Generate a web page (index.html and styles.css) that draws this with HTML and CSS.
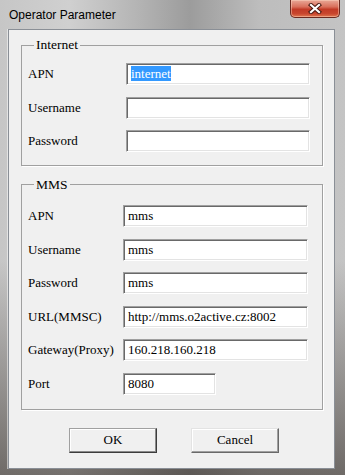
FILE: index.html
```html
<!DOCTYPE html>
<html lang="en">
<head>
  <meta charset="UTF-8">
  <title>Operator Parameter</title>
  <link rel="stylesheet" href="styles.css">
</head>
<body>
  <div class="window">
    <div class="titlebar">
      <span class="title">Operator Parameter</span>
      <div class="close-btn">
        <svg width="14" height="11" viewBox="0 0 14 11">
          <path d="M3 2 L11 9 M11 2 L3 9" stroke="#4a1a12" stroke-width="4.2" stroke-linecap="square"/>
          <path d="M3 2 L11 9 M11 2 L3 9" stroke="#fff" stroke-width="2.2" stroke-linecap="square"/>
        </svg>
      </div>
    </div>

    <div class="client">
      <fieldset class="group group-internet">
        <legend>Internet</legend>
        <div class="rows">
          <label>APN</label>
          <div class="field"><span class="selected">internet</span></div>
          <label>Username</label>
          <div class="field"></div>
          <label>Password</label>
          <div class="field"></div>
        </div>
      </fieldset>

      <fieldset class="group group-mms">
        <legend>MMS</legend>
        <div class="rows">
          <label>APN</label>
          <div class="field">mms</div>
          <label>Username</label>
          <div class="field">mms</div>
          <label>Password</label>
          <div class="field">mms</div>
          <label>URL(MMSC)</label>
          <div class="field">http://mms.o2active.cz:8002</div>
          <label>Gateway(Proxy)</label>
          <div class="field">160.218.160.218</div>
          <label>Port</label>
          <div class="field field-short">8080</div>
        </div>
      </fieldset>

      <div class="buttons">
        <button class="btn btn-default">OK</button>
        <button class="btn">Cancel</button>
      </div>
    </div>
  </div>
</body>
</html>
```

FILE: styles.css
```css
body {
  margin: 0;
  background: #fff;
  font-family: "Liberation Serif", "Times New Roman", serif;
  font-size: 13px;
  color: #000;
}

.window {
  width: 345px;
  height: 475px;
  box-sizing: border-box;
  padding-bottom: 6px;
  background:
    linear-gradient(to bottom, rgba(0, 0, 0, 0) 0%, rgba(0, 0, 0, 0) 55%, rgba(40, 32, 26, 0.55) 100%),
    linear-gradient(to right, #c6c6c6 0%, #d0d0d0 20%, #b4b4b4 40%, #9c9c9c 55%, #bdbdbd 75%, #c4c4c4 100%);
}

.titlebar {
  height: 29px;
  display: flex;
  align-items: flex-start;
  justify-content: space-between;
  padding-left: 9px;
  padding-right: 5px;
}

.title {
  font-family: "Liberation Sans", Arial, sans-serif;
  font-size: 12px;
  line-height: 14px;
  margin-top: 8px;
  color: #000;
}

.close-btn {
  width: 50px;
  height: 18px;
  box-sizing: border-box;
  display: flex;
  align-items: center;
  justify-content: center;
  border: 1px solid #6b2a20;
  border-top: none;
  border-radius: 0 0 5px 5px;
  background: linear-gradient(to bottom, #e9a897 0%, #d9705c 40%, #c23a26 55%, #c8462e 80%, #e0764f 100%);
  box-shadow: inset 0 0 0 1px rgba(255, 220, 200, 0.45);
}

.close-btn svg {
  display: block;
}

.client {
  margin: 0 10px 0 8px;
  height: 440px;
  box-sizing: border-box;
  border: 1px solid #8a8f96;
  box-shadow: -1px 0 0 rgba(255, 255, 255, 0.5);
  background: #f0f0f0;
  padding: 7px 11px 0 12px;
}

.group {
  margin: 0;
  border: 1px solid #a0a0a0;
  box-shadow: 1px 1px 0 #fff;
  min-inline-size: 0;
}

.group legend {
  margin-left: 6px;
  padding: 0 2px;
  font-size: 13.5px;
  line-height: 16px;
}

.group-internet {
  padding: 10px 0 12.8px 6px;
}

.group-mms {
  margin-top: 11px;
  padding: 12px 0 14px 6px;
}

.rows {
  display: grid;
  row-gap: 11.6px;
  align-items: center;
}

.group-internet .rows {
  grid-template-columns: 98px 184px;
}

.group-mms .rows {
  grid-template-columns: 95px 185px;
}

.rows label {
  line-height: 16px;
}

.field {
  height: 22px;
  box-sizing: border-box;
  background: #fff;
  border: 1px solid;
  border-color: #a0a0a0 #fff #fff #a0a0a0;
  box-shadow: inset 1px 1px 0 #696969, inset -1px -1px 0 #e3e3e3;
  padding: 0 4px;
  line-height: 19px;
  white-space: nowrap;
  overflow: hidden;
}

.field-short {
  width: 93px;
}

.selected {
  background: #3399ff;
  color: #fff;
}

.buttons {
  display: flex;
  justify-content: center;
  gap: 34px;
  margin-top: 18px;
  padding-left: 4px;
}

.btn {
  width: 88px;
  height: 25px;
  font-family: "Liberation Serif", "Times New Roman", serif;
  font-size: 13px;
  color: #000;
  background: #f0f0f0;
  border: 1px solid;
  border-color: #e3e3e3 #696969 #696969 #e3e3e3;
  box-shadow: inset -1px -1px 0 #a0a0a0, inset 1px 1px 0 #fff;
  padding: 0;
}

.btn-default {
  border-color: #a0a0a0 #3c3c3c #3c3c3c #a0a0a0;
  box-shadow: inset -1px -1px 0 #8a8a8a, inset 1px 1px 0 #fff;
}
```
